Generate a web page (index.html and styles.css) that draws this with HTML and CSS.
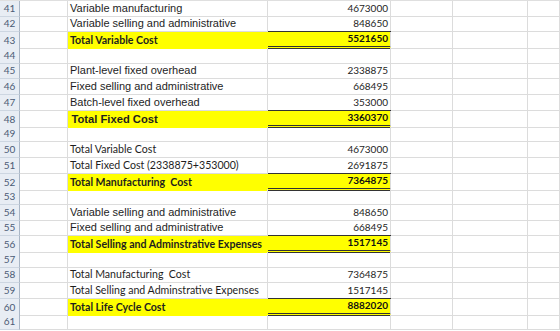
FILE: index.html
```html
<!DOCTYPE html>
<html>
<head>
<meta charset="utf-8">
<link rel="stylesheet" href="styles.css">
</head>
<body>
<div class="sheet">
  <div class="row"><div class="hd">41</div><div class="a"></div><div class="b arial">Variable manufacturing</div><div class="c num">4673000</div><div class="d"></div><div class="e"></div><div class="f"></div></div>
  <div class="row"><div class="hd">42</div><div class="a"></div><div class="b arial">Variable selling and administrative</div><div class="c num">848650</div><div class="d"></div><div class="e"></div><div class="f"></div></div>
  <div class="row"><div class="hd">43</div><div class="a"></div><div class="b yel cal bold">Total Variable Cost</div><div class="c num yel tot bold">5521650</div><div class="d"></div><div class="e"></div><div class="f"></div></div>
  <div class="row"><div class="hd">44</div><div class="a"></div><div class="b"></div><div class="c"></div><div class="d"></div><div class="e"></div><div class="f"></div></div>
  <div class="row"><div class="hd">45</div><div class="a"></div><div class="b arial">Plant-level fixed overhead</div><div class="c num">2338875</div><div class="d"></div><div class="e"></div><div class="f"></div></div>
  <div class="row"><div class="hd">46</div><div class="a"></div><div class="b arial">Fixed selling and administrative</div><div class="c num">668495</div><div class="d"></div><div class="e"></div><div class="f"></div></div>
  <div class="row"><div class="hd">47</div><div class="a"></div><div class="b arial">Batch-level fixed overhead</div><div class="c num">353000</div><div class="d"></div><div class="e"></div><div class="f"></div></div>
  <div class="row"><div class="hd">48</div><div class="a"></div><div class="b yel arial bold indent">Total Fixed Cost</div><div class="c num yel tot bold">3360370</div><div class="d"></div><div class="e"></div><div class="f"></div></div>
  <div class="row"><div class="hd">49</div><div class="a"></div><div class="b"></div><div class="c"></div><div class="d"></div><div class="e"></div><div class="f"></div></div>
  <div class="row"><div class="hd">50</div><div class="a"></div><div class="b cal">Total Variable Cost</div><div class="c num">4673000</div><div class="d"></div><div class="e"></div><div class="f"></div></div>
  <div class="row"><div class="hd">51</div><div class="a"></div><div class="b cal">Total Fixed Cost (2338875+353000)</div><div class="c num">2691875</div><div class="d"></div><div class="e"></div><div class="f"></div></div>
  <div class="row"><div class="hd">52</div><div class="a"></div><div class="b yel cal bold">Total Manufacturing&nbsp; Cost</div><div class="c num yel tot bold">7364875</div><div class="d"></div><div class="e"></div><div class="f"></div></div>
  <div class="row"><div class="hd">53</div><div class="a"></div><div class="b"></div><div class="c"></div><div class="d"></div><div class="e"></div><div class="f"></div></div>
  <div class="row"><div class="hd">54</div><div class="a"></div><div class="b arial">Variable selling and administrative</div><div class="c num">848650</div><div class="d"></div><div class="e"></div><div class="f"></div></div>
  <div class="row"><div class="hd">55</div><div class="a"></div><div class="b arial">Fixed selling and administrative</div><div class="c num">668495</div><div class="d"></div><div class="e"></div><div class="f"></div></div>
  <div class="row"><div class="hd">56</div><div class="a"></div><div class="b yel cal bold">Total Selling and Adminstrative Expenses</div><div class="c num yel tot bold">1517145</div><div class="d"></div><div class="e"></div><div class="f"></div></div>
  <div class="row"><div class="hd">57</div><div class="a"></div><div class="b"></div><div class="c"></div><div class="d"></div><div class="e"></div><div class="f"></div></div>
  <div class="row"><div class="hd">58</div><div class="a"></div><div class="b cal">Total Manufacturing&nbsp; Cost</div><div class="c num">7364875</div><div class="d"></div><div class="e"></div><div class="f"></div></div>
  <div class="row"><div class="hd">59</div><div class="a"></div><div class="b cal">Total Selling and Adminstrative Expenses</div><div class="c num">1517145</div><div class="d"></div><div class="e"></div><div class="f"></div></div>
  <div class="row"><div class="hd">60</div><div class="a"></div><div class="b yel cal bold">Total Life Cycle Cost</div><div class="c num yel tot bold">8882020</div><div class="d"></div><div class="e"></div><div class="f"></div></div>
  <div class="row"><div class="hd">61</div><div class="a"></div><div class="b"></div><div class="c"></div><div class="d"></div><div class="e"></div><div class="f"></div></div>
</div>
</body>
</html>
```
FILE: styles.css
```css
html, body {
  margin: 0;
  padding: 0;
  background: #ffffff;
}
.sheet {
  width: 560px;
  height: 331px;
  overflow: hidden;
  border-top: 1px solid #dfdfdf;
  box-sizing: border-box;
}
.row {
  display: grid;
  grid-template-columns: 20px 48px 200px 123px 62px 75px 1fr;
  height: 15.7px;
}
.row > div {
  box-sizing: border-box;
  border-right: 1px solid #dcdcdc;
  border-bottom: 1px solid #dcdcdc;
  white-space: nowrap;
  overflow: visible;
  color: #1e1e1e;
  display: flex;
  align-items: flex-end;
  padding: 0 2px 1px 2px;
  line-height: 13px;
}
.row > .hd {
  background: #e8edf4;
  color: #4b5b74;
  border-right: 1px solid #a9b6c6;
  border-bottom: 1px solid #cdd6e1;
  justify-content: center;
  font-family: "Lato", "Liberation Sans", sans-serif;
  font-size: 10px;
  padding: 0 0 1px 0;
}
.arial {
  font-family: "Liberation Sans", Arial, sans-serif;
  font-size: 11px;
  color: #2e2e2e;
}
.row > .indent {
  padding-left: 3.5px;
  font-size: 11.2px;
}
.cal {
  font-family: "Lato", "Liberation Sans", sans-serif;
  font-size: 10.6px;
}
.num {
  font-family: "Lato", "Liberation Sans", sans-serif;
  font-size: 10px;
  justify-content: flex-end;
}
.bold {
  font-weight: bold;
}
.row > .yel {
  background: #ffff00;
}
.row > .b.yel {
  border-right-color: #ffff00;
  border-bottom-color: #ffff00;
}
.row > .tot {
  border-bottom: 3px double #333333;
  box-shadow: 0 -1px 0 #333333;
  color: #111111;
}
```
